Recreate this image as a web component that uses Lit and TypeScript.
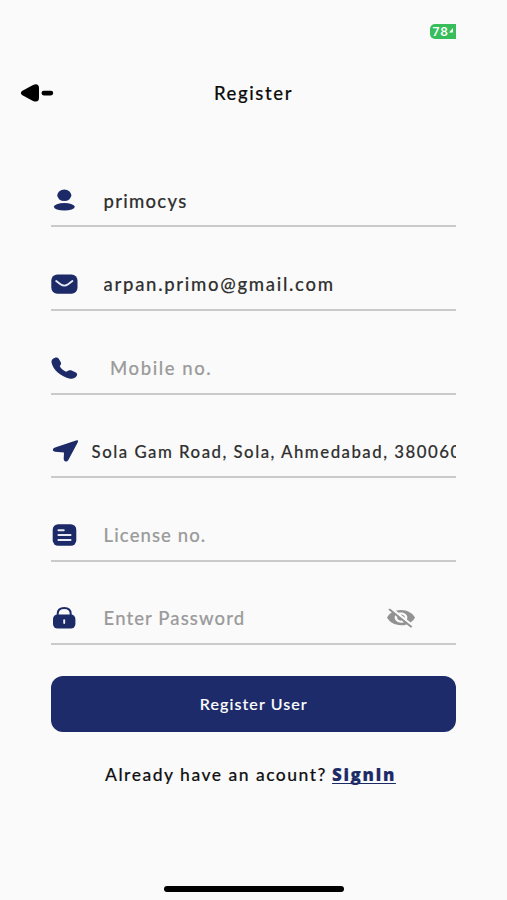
import { LitElement, html, css, svg, TemplateResult } from "lit";
import { customElement } from "lit/decorators.js";
import { classMap } from "lit/directives/class-map.js";

interface Field {
  id: string;
  text: string;
  filled: boolean;
  icon: TemplateResult;
  toggle?: boolean;
}

const icons = {
  user: svg`<ellipse cx="14.3" cy="9.3" rx="7" ry="5.8"/><ellipse cx="14.3" cy="20.8" rx="10.5" ry="3.7"/>`,
  mail: svg`<rect x="1.3" y="4.4" width="26.2" height="19.4" rx="6"/><path class="line" d="M6.2 11 L10.5 14.3 Q14.3 17 18.1 14.3 L22.4 11"/>`,
  phone: svg`<path d="M1.5 8.2C1.2 6 2.6 4.4 5 3.7C6.8 3.2 8.2 3.8 9.2 5.4L10.8 8.2C11.5 9.7 10.7 10.9 9.8 12.2C11 14.4 13.5 16.6 16.2 17.7C17.7 16.8 19.6 15.9 21.6 16.4L25.4 18.2C27.3 19.2 27.6 20.6 26.6 22C25.2 24 22.8 25.2 20.2 24.7C10.7 22.5 2.8 15.6 1.5 8.2Z"/>`,
  pin: svg`<path d="M26 3.5Q29 2.4 27.8 5.2L18.2 23.2Q16.8 25 15 24.2Q13.6 23.6 13.7 22L14 15.4L5 14.8Q2.8 14.4 2.8 12.8Q2.8 11.3 5 10.6Z"/>`,
  doc: svg`<rect x="2.7" y="3.2" width="23.6" height="21.6" rx="5.5"/><path class="line" d="M8.4 9.3H13.8M8.4 14H20.6M8.4 19H20.6"/>`,
  lock: svg`<path class="shackle" d="M7.7 12.5V9.8C7.7 6.2 10.2 4 14.2 4S20.7 6.2 20.7 9.8V12.5"/><rect x="3" y="10.4" width="22.4" height="14.2" rx="4.6"/><path class="line" d="M14.2 16.2V19"/>`,
};

const fields: Field[] = [
  { id: "name", text: "primocys", filled: true, icon: icons.user },
  { id: "email", text: "arpan.primo@gmail.com", filled: true, icon: icons.mail },
  { id: "mobile", text: "Mobile no.", filled: false, icon: icons.phone },
  { id: "address", text: "Sola Gam Road, Sola, Ahmedabad, 380060", filled: true, icon: icons.pin },
  { id: "license", text: "License no.", filled: false, icon: icons.doc },
  { id: "password", text: "Enter Password", filled: false, icon: icons.lock, toggle: true },
];

@customElement("app-root")
export class AppRoot extends LitElement {
  static styles = css`
    :host {
      display: flex;
      flex-direction: column;
      box-sizing: border-box;
      width: 100%;
      height: 900px;
      overflow: hidden;
      background: #fafafa;
      color: #111;
      font-family: Lato, "Open Sans", sans-serif;
      font-weight: 500;
      -webkit-text-stroke: 0.15px currentColor;
    }
    .status {
      display: flex;
      justify-content: flex-end;
      height: 15px;
      padding: 24px 51.5px 0 0;
    }
    .battery {
      box-sizing: border-box;
      width: 26px;
      overflow: hidden;
      padding-left: 3px;
      border-radius: 5px 0 0 5px;
      background: #38bd5b;
      color: #fff;
      font: 600 12px/15px Inter, sans-serif;
      letter-spacing: 1px;
      white-space: nowrap;
      display: flex;
      align-items: center;
      -webkit-text-stroke: 0;
    }
    .bolt { width: 4px; height: 8px; flex: none; fill: #fff; }
    .header {
      display: grid;
      grid-template-columns: 54px 1fr 54px;
      align-items: center;
      height: 40px;
      margin-top: 34px;
    }
    .back { width: 34px; height: 20px; margin: -1px 0 0 20px; }
    .title {
      margin: 0;
      text-align: center;
      font-size: 18.5px;
      font-weight: 500;
      line-height: 24px;
      letter-spacing: 1.6px;
      color: #0c0c0c;
    }
    .form {
      display: flex;
      flex-direction: column;
      margin: 30.8px 50.7px 0 51.3px;
    }
    .field {
      box-sizing: border-box;
      display: flex;
      align-items: flex-end;
      height: 83.6px;
      padding-bottom: 11.5px;
      border-bottom: 2px solid #cacaca;
    }
    .icon { width: 29px; height: 28px; flex: none; margin: 0 0 -0.6px -1.2px; fill: #1d2a68; }
    .line { fill: none; stroke: #e8eaf8; stroke-width: 1.9; stroke-linecap: round; stroke-linejoin: round; }
    .shackle { fill: none; stroke: #1d2a68; stroke-width: 2; }
    .value {
      flex: 1;
      min-width: 0;
      overflow: hidden;
      margin-left: 24.5px;
      white-space: nowrap;
      font-size: 18.5px;
      line-height: 26px;
      letter-spacing: 1.1px;
      color: #9b9b9b;
    }
    .filled { color: #303030; }
    .name { letter-spacing: 1.25px; }
    .email { letter-spacing: 1.7px; }
    .mobile { margin-left: 31px; letter-spacing: 1.55px; }
    .address { margin-left: 12.5px; font-size: 16.8px; letter-spacing: 1.5px; }
    .password { padding-bottom: 1px; }
    .eye { width: 28px; height: 20px; flex: none; margin: 0 41px 4px 0; fill: #929292; }
    .submit {
      height: 56px;
      margin: 30.8px 50.7px 0 51.3px;
      padding: 0;
      border: 0;
      border-radius: 12px;
      background: #1d2b6a;
      color: #fff;
      font: 500 16px/56px Lato, sans-serif;
      letter-spacing: 1.1px;
      -webkit-text-stroke: 0.15px currentColor;
    }
    .footer {
      display: flex;
      justify-content: center;
      gap: 5px;
      margin: 32px 6px 0 0;
      font-size: 17.5px;
      line-height: 22px;
      letter-spacing: 1.5px;
      white-space: nowrap;
    }
    .signin {
      color: #1d2a68;
      font-family: "Open Sans", sans-serif;
      font-size: 17px;
      font-weight: 800;
      letter-spacing: 1.6px;
      text-decoration: underline;
      text-decoration-thickness: 1.3px;
      text-underline-offset: 1.5px;
      text-decoration-skip-ink: none;
    }
    .home { width: 180px; height: 5.4px; margin: auto 0 8.3px 164px; border-radius: 3px; background: #000; }
  `;

  private renderField(f: Field) {
    return html`<div class="field">
      <svg class="icon" viewBox="0 0 29 28">${f.icon}</svg>
      <div class=${classMap({ value: true, filled: f.filled, [f.id]: true })}>${f.text}</div>
      ${f.toggle
        ? html`<svg class="eye" viewBox="1 2.6 22 19.6" preserveAspectRatio="none">
            <path d="M12 7c2.76 0 5 2.24 5 5 0 .65-.13 1.26-.36 1.83l2.92 2.92c1.51-1.26 2.7-2.89 3.43-4.75-1.73-4.39-6-7.5-11-7.5-1.4 0-2.74.25-3.98.7l2.16 2.16C10.74 7.13 11.35 7 12 7zM2 4.27l2.28 2.28.46.46C3.08 8.3 1.78 10.02 1 12c1.73 4.39 6 7.5 11 7.5 1.55 0 3.03-.3 4.38-.84l.42.42L19.73 22 21 20.73 3.27 3 2 4.27zM7.53 9.8l1.55 1.55c-.05.21-.08.43-.08.65 0 1.66 1.34 3 3 3 .22 0 .44-.03.65-.08l1.55 1.55c-.67.33-1.41.53-2.2.53-2.76 0-5-2.24-5-5 0-.79.2-1.53.53-2.2zm4.31-.78l3.15 3.15.02-.16c0-1.66-1.34-3-3-3l-.17.01z"/>
          </svg>`
        : null}
    </div>`;
  }

  render() {
    return html`
      <div class="status">
        <div class="battery">78<svg class="bolt" viewBox="0 0 4 8"><path d="M4 0L0 4.6H4Z"/></svg></div>
      </div>
      <div class="header">
        <svg class="back" viewBox="0 0 34 20">
          <path d="M2 8L13 1.9Q18.8 -0.2 19 5V15Q18.8 20 13 18L2 12Q-0.2 10 2 8Z"/>
          <rect x="21.5" y="7.8" width="11.7" height="4.6" rx="2.3"/>
        </svg>
        <h1 class="title">Register</h1>
      </div>
      <div class="form">${fields.map((f) => this.renderField(f))}</div>
      <button class="submit">Register User</button>
      <div class="footer"><span>Already have an acount?</span><a class="signin">SignIn</a></div>
      <div class="home"></div>
    `;
  }
}
